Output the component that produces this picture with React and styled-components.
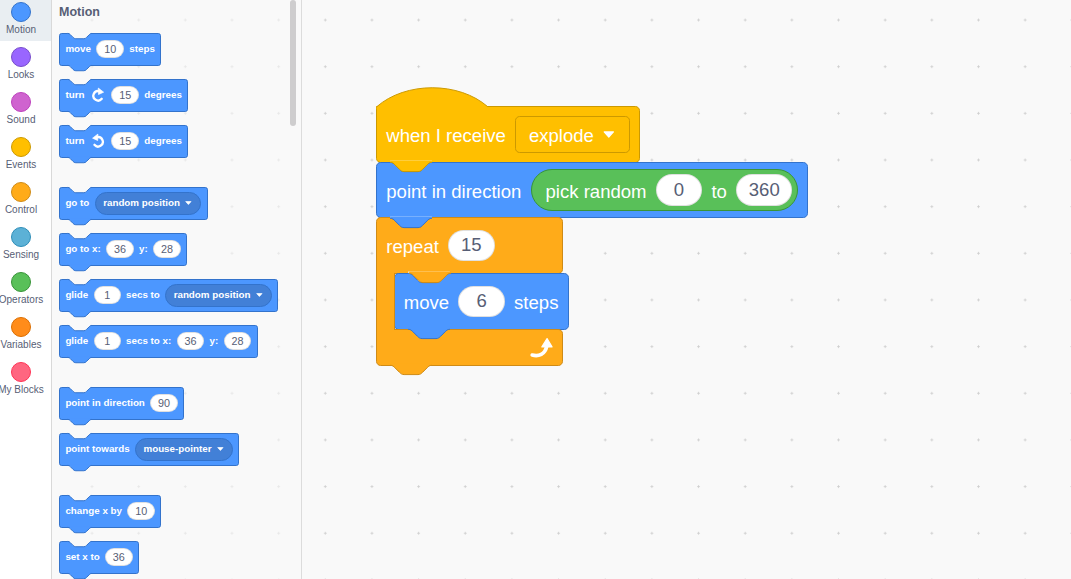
import React from "react";
import styled, { createGlobalStyle } from "styled-components";

const GlobalStyle = createGlobalStyle`
  html, body {
    margin: 0;
    padding: 0;
  }
  body {
    width: 1071px;
    height: 579px;
    overflow: hidden;
    background: #f9f9f9;
    font-family: "Liberation Sans", Arial, sans-serif;
  }
`;

// block scale in the flyout and in the workspace
const PAL = 0.675;
const WS = 1.16;

const motion = { fill: "#4c97ff", stroke: "#3373cc", menu: "#4280d7" };
const events = { fill: "#ffbf00", stroke: "#cc9900", menu: "#ffbf00" };
const control = { fill: "#ffab19", stroke: "#cf8b17" };
const operators = { fill: "#59c059", stroke: "#389438" };

const categories = [
  ["Motion", "#4c97ff", "#3373cc"],
  ["Looks", "#9966ff", "#774dcb"],
  ["Sound", "#cf63cf", "#bd42bd"],
  ["Events", "#ffbf00", "#cc9900"],
  ["Control", "#ffab19", "#cf8b17"],
  ["Sensing", "#5cb1d6", "#2e8eb8"],
  ["Operators", "#59c059", "#389438"],
  ["Variables", "#ff8c1a", "#db6e00"],
  ["My Blocks", "#ff6680", "#ff3355"],
];

const paletteGroups = [
  [
    ["move", { n: "10" }, "steps"],
    ["turn", { icon: "cw" }, { n: "15" }, "degrees"],
    ["turn", { icon: "ccw" }, { n: "15" }, "degrees"],
  ],
  [
    ["go to", { menu: "random position" }],
    ["go to x:", { n: "36" }, "y:", { n: "28" }],
    ["glide", { n: "1" }, "secs to", { menu: "random position" }],
    ["glide", { n: "1" }, "secs to x:", { n: "36" }, "y:", { n: "28" }],
  ],
  [
    ["point in direction", { n: "90" }],
    ["point towards", { menu: "mouse-pointer" }],
  ],
  [
    ["change x by", { n: "10" }],
    ["set x to", { n: "36" }],
  ],
];

const Page = styled.div`
  display: flex;
  width: 1071px;
  height: 579px;
`;

const CategoryMenu = styled.nav`
  width: 52px;
  box-sizing: border-box;
  flex-shrink: 0;
  background: #fff;
  border-right: 1px solid #d9d9d9;
  overflow: hidden;
  display: flex;
  flex-direction: column;
`;

const CategoryItem = styled.div`
  height: 41px;
  margin-bottom: 4px;
  padding: 2px 9px 0 0;
  box-sizing: border-box;
  display: flex;
  flex-direction: column;
  align-items: center;
  gap: 2px;
  background: ${(p) => (p.$active ? "#e9eef2" : "transparent")};
`;

const CategoryDot = styled.span`
  width: 20px;
  height: 20px;
  flex-shrink: 0;
  box-sizing: border-box;
  border-radius: 50%;
  background: ${(p) => p.$fill};
  border: 1px solid ${(p) => p.$stroke};
`;

const CategoryLabel = styled.span`
  font-size: 10px;
  line-height: 12px;
  color: #575e75;
  white-space: nowrap;
`;

const Canvas = styled.div`
  flex: 1;
  display: flex;
  position: relative;
  background-color: #f9f9f9;
  background-image: radial-gradient(circle, #cfcfcf 0.9px, transparent 1.4px);
  background-size: 46.67px 46.67px;
  background-position: 16.7px -3.3px;
`;

const Flyout = styled.div`
  position: relative;
  width: 250px;
  flex-shrink: 0;
  box-sizing: border-box;
  border-right: 1px solid #dcdcdc;
  background: rgba(249, 249, 249, 0.6);
  padding: 4px 0 0 7px;
  overflow: hidden;
`;

const FlyoutHeading = styled.div`
  font-weight: 700;
  font-size: 12.5px;
  line-height: 16px;
  color: #575e75;
  margin-bottom: 12.7px;
`;

const FlyoutScrollbar = styled.div`
  position: absolute;
  top: 0;
  right: 5px;
  width: 6px;
  height: 126px;
  border-radius: 3px;
  background: #cecdce;
`;

const BlockGroup = styled.div`
  display: flex;
  flex-direction: column;
  align-items: flex-start;
  gap: 12.6px;
  margin-bottom: 28.6px;
`;

const Workspace = styled.div`
  flex: 1;
  position: relative;
  overflow: hidden;
`;

const Script = styled.div`
  position: absolute;
  left: 74px;
  top: 106px;
  display: flex;
  flex-direction: column;
  align-items: flex-start;
`;

const Block = styled.div`
  position: relative;
  display: flex;
  align-items: center;
  justify-content: ${(p) => p.$justify || "flex-start"};
  width: ${(p) => (p.$w ? `${p.$w * p.$s}px` : "max-content")};
  box-sizing: border-box;
  min-height: ${(p) => (p.$h || 48) * p.$s + 1}px;
  margin-top: ${(p) => (p.$stacked ? "-1px" : "0")};
  padding: 0 ${(p) => (p.$pr ?? 8) * p.$s}px 0 ${(p) => 8 * p.$s}px;
  gap: ${(p) => 8 * p.$s}px;
  background: ${(p) => p.$c.fill};
  border: 1px solid ${(p) => p.$c.stroke};
  border-radius: ${(p) =>
    (p.$corners || [4, 4, 4, 4]).map((r) => `${r * p.$s}px`).join(" ")};
  color: #fff;
  font-size: ${(p) => (p.$bold ? 9.8 : 16 * p.$s)}px;
  font-weight: ${(p) => (p.$bold ? 700 : 400)};
  white-space: nowrap;
`;

// workspace text sits a touch below the centre line
const Label = styled.span`
  line-height: 1;
  padding-top: ${(p) => (p.$low ? 4 : 0)}px;
`;

const NumberField = styled.span`
  display: inline-flex;
  align-items: center;
  justify-content: center;
  flex-shrink: 0;
  box-sizing: border-box;
  height: ${(p) => 27 * p.$s}px;
  min-width: ${(p) => 40 * p.$s}px;
  padding: 0 ${(p) => 10 * p.$s}px;
  border-radius: ${(p) => 14 * p.$s}px;
  background: #fff;
  border: 1px solid rgba(0, 0, 0, 0.12);
  color: #575e75;
  font-size: ${(p) => 16 * p.$s}px;
  font-weight: 400;
  line-height: 1;
`;

const MenuField = styled.span`
  display: inline-flex;
  align-items: center;
  flex-shrink: 0;
  gap: ${(p) => 8 * p.$s}px;
  box-sizing: border-box;
  height: ${(p) => p.$h * p.$s}px;
  padding: 0 ${(p) => 12 * p.$s}px 0 ${(p) => 11 * p.$s}px;
  background: ${(p) => p.$c.menu};
  border: 1px solid ${(p) => p.$c.stroke};
  border-radius: ${(p) => (p.$pill ? 20 : 4) * p.$s}px;
  color: #fff;
`;

const Reporter = styled.span`
  display: inline-flex;
  align-items: center;
  flex-shrink: 0;
  gap: ${(p) => 8 * p.$s}px;
  box-sizing: border-box;
  height: ${(p) => 35.6 * p.$s}px;
  padding: 0 ${(p) => 4 * p.$s}px 0 ${(p) => 12 * p.$s}px;
  background: ${(p) => p.$c.fill};
  border: 1px solid ${(p) => p.$c.stroke};
  border-radius: ${(p) => 20 * p.$s}px;
`;

const Connector = styled.svg`
  position: absolute;
  left: ${(p) => (p.$x - 1) * p.$s - 0.5}px;
  top: ${(p) =>
    p.$bottom
      ? `calc(100% + 0.5px - ${2 * p.$s}px)`
      : `${-0.5 - 2 * p.$s}px`};
  width: ${(p) => 38 * p.$s}px;
  height: ${(p) => 11 * p.$s}px;
  z-index: ${(p) => (p.$bottom ? 2 : 1)};
  overflow: visible;
`;

const Cap = styled.svg`
  position: absolute;
  left: -1px;
  top: ${(p) => -0.5 - 18 * p.$s}px;
  width: ${(p) => 97 * p.$s}px;
  height: ${(p) => 20 * p.$s}px;
  overflow: visible;
`;

const CBlock = styled.div`
  position: relative;
  display: flex;
  flex-direction: column;
  width: max-content;
  margin-top: -1px;
`;

const Mouth = styled.div`
  display: flex;
  align-items: stretch;
  margin-top: -1px;
`;

const MouthSide = styled.div`
  position: relative;
  z-index: 1;
  width: ${(p) => 16 * p.$s}px;
  flex-shrink: 0;
  box-sizing: border-box;
  background: ${(p) => p.$c.fill};
  border-left: 1px solid ${(p) => p.$c.stroke};
  border-right: 1px solid ${(p) => p.$c.stroke};
`;

const MouthBody = styled.div`
  display: flex;
  flex-direction: column;
  align-items: flex-start;
  margin-left: -1px;
`;

const NOTCH =
  "c2 0 3 1 4 2 l4 4 c1 1 2 2 4 2 h12 c2 0 3 -1 4 -2 l4 -4 c1 -1 2 -2 4 -2";

function Notch({ s, c, x = 12, bottom, bg = "#f9f9f9" }) {
  return (
    <Connector $s={s} $x={x} $bottom={bottom} viewBox="-1 -2 38 11">
      <path d={`M0 -1.6 V0 ${NOTCH} V-1.6 Z`} fill={bottom ? c.fill : bg} />
      <path
        d={`M0 0 ${NOTCH}`}
        fill="none"
        stroke={c.stroke}
        strokeWidth="1"
        vectorEffect="non-scaling-stroke"
      />
    </Connector>
  );
}

function HatCap({ s, c }) {
  return (
    <Cap $s={s} viewBox="0 -18 97 20">
      <path d="M0.5 2 V0 C25.5 -22 71.5 -22 96.5 0 V2 Z" fill={c.fill} />
      <path
        d="M0.5 0 C25.5 -22 71.5 -22 96.5 0"
        fill="none"
        stroke={c.stroke}
        strokeWidth="1"
        vectorEffect="non-scaling-stroke"
      />
    </Cap>
  );
}

function Caret({ s }) {
  return (
    <svg width={10 * s} height={6 * s} viewBox="0 0 10 6">
      <path d="M1 0.8 H9 L5 5.2 Z" fill="#fff" stroke="#fff" strokeLinejoin="round" />
    </svg>
  );
}

function TurnIcon({ s, ccw }) {
  return (
    <svg width={24 * s} height={24 * s} viewBox="0 0 24 24">
      <g transform={ccw ? "translate(24 0) scale(-1 1)" : undefined}>
        <path
          d="M17.4 17.5 A7 7 0 1 1 13.8 6.3"
          fill="none"
          stroke="#fff"
          strokeWidth="3.4"
          strokeLinecap="round"
        />
        <path d="M12.3 1.6 L20.2 7.6 L12.6 11.2 Z" fill="#fff" stroke="#fff" strokeLinejoin="round" />
      </g>
    </svg>
  );
}

function RepeatIcon({ s }) {
  return (
    <svg width={24 * s} height={24 * s} viewBox="0 0 24 24">
      <path
        d="M4.5 19 C10 20.5 15.5 18.5 17 11.5"
        fill="none"
        stroke="#fff"
        strokeWidth="3.2"
        strokeLinecap="round"
      />
      <path d="M12.8 12 L17.3 4.8 L21.6 12 Z" fill="#fff" stroke="#fff" strokeLinejoin="round" />
    </svg>
  );
}

function Part({ part, s, c }) {
  if (typeof part === "string") return <Label>{part}</Label>;
  if (part.n) return <NumberField $s={s}>{part.n}</NumberField>;
  if (part.menu)
    return (
      <MenuField $s={s} $c={c} $h={34.5} $pill>
        <Label>{part.menu}</Label>
        <Caret s={s} />
      </MenuField>
    );
  return <TurnIcon s={s} ccw={part.icon === "ccw"} />;
}

const StackBlock = ({ s, c, hat, stacked, children, ...rest }) => (
  <Block
    $s={s}
    $c={c}
    $stacked={stacked}
    $corners={hat ? [0, 4, 4, 4] : undefined}
    {...rest}
  >
    {hat ? <HatCap s={s} c={c} /> : <Notch s={s} c={c} />}
    {children}
    <Notch s={s} c={c} bottom />
  </Block>
);

const App = () => (
  <>
    <GlobalStyle />
    <Page>
      <CategoryMenu>
        {categories.map(([name, fill, stroke], i) => (
          <CategoryItem key={name} $active={i === 0}>
            <CategoryDot $fill={fill} $stroke={stroke} />
            <CategoryLabel>{name}</CategoryLabel>
          </CategoryItem>
        ))}
      </CategoryMenu>

      <Canvas>
        <Flyout>
          <FlyoutHeading>Motion</FlyoutHeading>
          {paletteGroups.map((group, gi) => (
            <BlockGroup key={gi}>
              {group.map((parts, bi) => (
                <StackBlock key={bi} s={PAL} c={motion} $bold>
                  {parts.map((part, pi) => (
                    <Part key={pi} part={part} s={PAL} c={motion} />
                  ))}
                </StackBlock>
              ))}
            </BlockGroup>
          ))}
          <FlyoutScrollbar />
        </Flyout>

        <Workspace>
          <Script>
            <StackBlock s={WS} c={events} hat>
              <Label $low>when I receive</Label>
              <MenuField $s={WS} $c={events} $h={32}>
                <Label $low>explode</Label>
                <Caret s={WS} />
              </MenuField>
            </StackBlock>

            <StackBlock s={WS} c={motion} stacked>
              <Label $low>point in direction</Label>
              <Reporter $s={WS} $c={operators}>
                <Label $low>pick random</Label>
                <NumberField $s={WS}>0</NumberField>
                <Label $low>to</Label>
                <NumberField $s={WS}>360</NumberField>
              </Reporter>
            </StackBlock>

            <CBlock>
              <Block $s={WS} $c={control} $w={161} $corners={[4, 4, 4, 0]}>
                <Notch s={WS} c={control} />
                <Label $low>repeat</Label>
                <NumberField $s={WS}>15</NumberField>
                <Notch s={WS} c={control} x={28} bottom />
              </Block>
              <Mouth>
                <MouthSide $s={WS} $c={control} />
                <MouthBody>
                  <StackBlock s={WS} c={motion}>
                    <Label $low>move</Label>
                    <NumberField $s={WS}>6</NumberField>
                    <Label $low>steps</Label>
                  </StackBlock>
                </MouthBody>
              </Mouth>
              <Block
                $s={WS}
                $c={control}
                $w={161}
                $h={31}
                $pr={6}
                $stacked
                $justify="flex-end"
                $corners={[0, 4, 4, 4]}
              >
                <RepeatIcon s={WS} />
                <Notch s={WS} c={control} bottom />
              </Block>
            </CBlock>
          </Script>
        </Workspace>
      </Canvas>
    </Page>
  </>
);

export default App;
